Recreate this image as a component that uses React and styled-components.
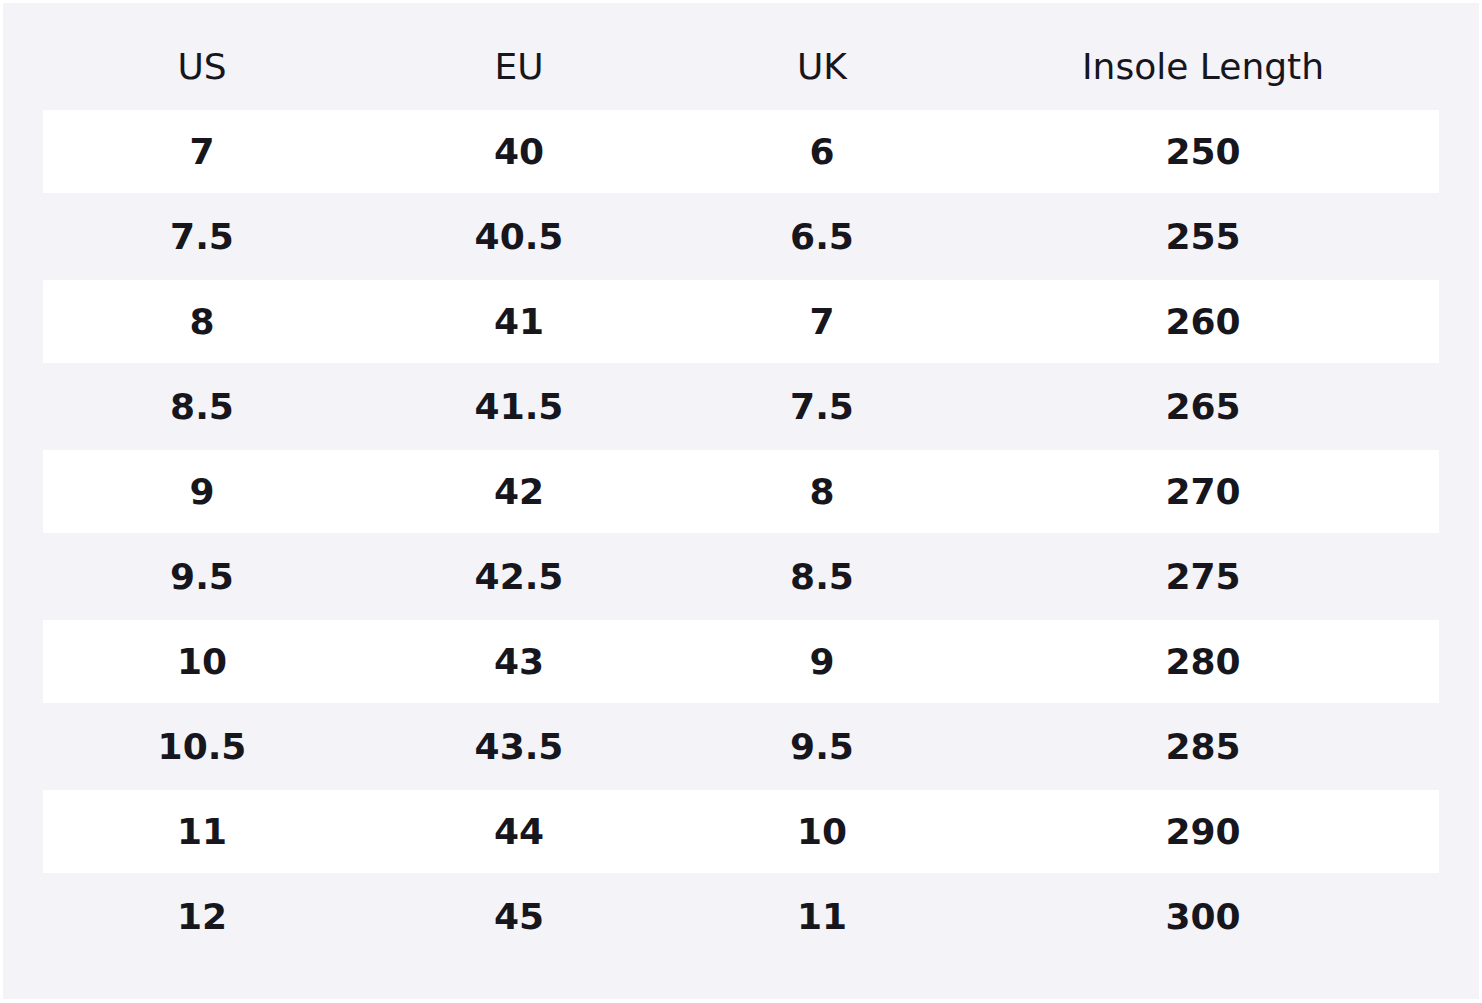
import React from "react";
import styled, { createGlobalStyle } from "styled-components";

const Global = createGlobalStyle`
  html, body { margin: 0; padding: 0; background: #ffffff; }
  body { font-family: "DejaVu Sans", "Liberation Sans", sans-serif; }
`;

const Page = styled.div`
  padding: 3px;
  width: 1482px;
  height: 1003px;
  box-sizing: border-box;
`;

const Panel = styled.div`
  background: #f3f3f8;
  width: 1476px;
  height: 996px;
  box-sizing: border-box;
  padding: 40px;
`;

const Table = styled.div`
  display: grid;
  grid-template-columns: 318px 316px 290px 1fr;
`;

const HeaderCell = styled.div`
  height: 66px;
  box-sizing: border-box;
  padding-top: 3px;
  line-height: 42px;
  text-align: center;
  font-size: 36px;
  font-weight: 400;
  color: #16161c;
`;

const Cell = styled.div`
  height: 85px;
  box-sizing: border-box;
  display: flex;
  align-items: center;
  justify-content: center;
  font-size: 36px;
  font-weight: 700;
  color: #16161c;
  background: ${(p) => (p.$striped ? "#ffffff" : "transparent")};
  border-top: 1px solid #f3f3f8;
  border-bottom: 1px solid #f3f3f8;
`;

const headers = ["US", "EU", "UK", "Insole Length"];
const rows = [
  ["7", "40", "6", "250"],
  ["7.5", "40.5", "6.5", "255"],
  ["8", "41", "7", "260"],
  ["8.5", "41.5", "7.5", "265"],
  ["9", "42", "8", "270"],
  ["9.5", "42.5", "8.5", "275"],
  ["10", "43", "9", "280"],
  ["10.5", "43.5", "9.5", "285"],
  ["11", "44", "10", "290"],
  ["12", "45", "11", "300"],
];

export default function App() {
  return (
    <>
      <Global />
      <Page>
        <Panel>
          <Table>
            {headers.map((h) => (
              <HeaderCell key={h}>{h}</HeaderCell>
            ))}
            {rows.map((r, i) =>
              r.map((v, j) => (
                <Cell key={`${i}-${j}`} $striped={i % 2 === 0}>
                  {v}
                </Cell>
              ))
            )}
          </Table>
        </Panel>
      </Page>
    </>
  );
}
